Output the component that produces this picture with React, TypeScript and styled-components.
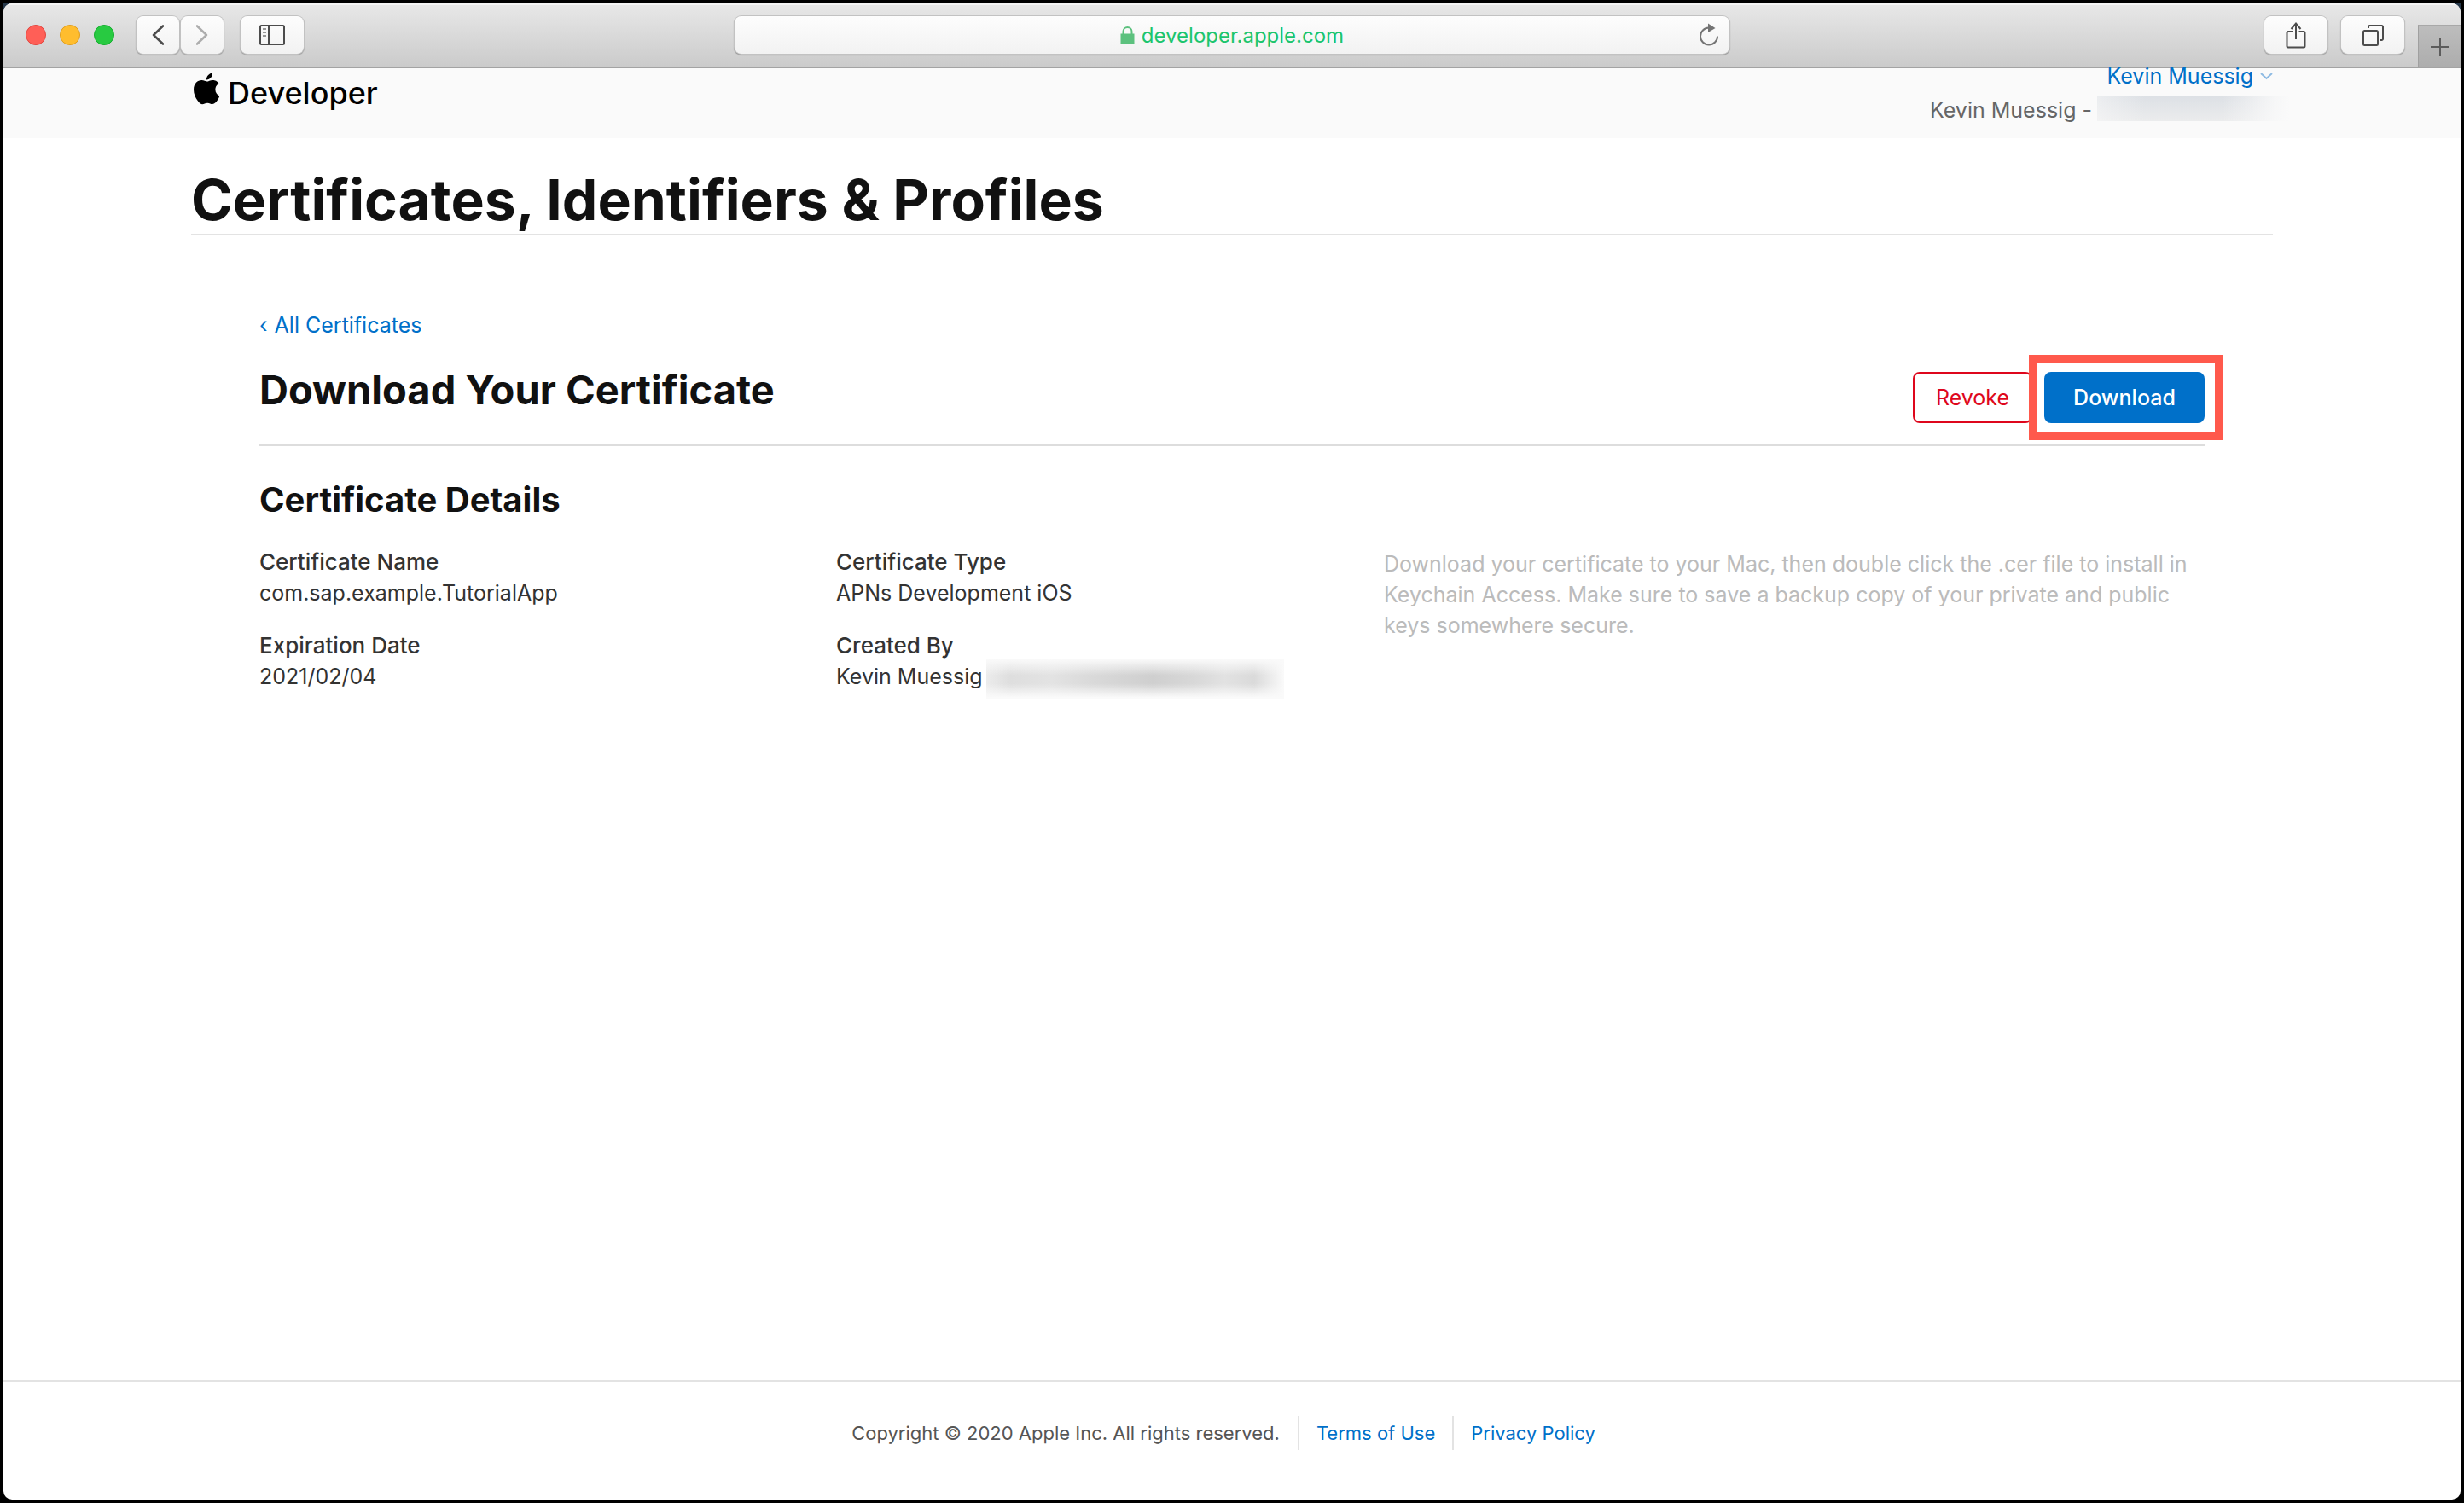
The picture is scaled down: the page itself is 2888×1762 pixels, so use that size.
import React from 'react';
import styled, { createGlobalStyle } from 'styled-components';

const GlobalStyle = createGlobalStyle`
  *, *::before, *::after { box-sizing: border-box; }
  body { margin: 0; background: #000; }
  h1, h2, h3, p, dl, dd, dt, ul { margin: 0; padding: 0; }
  a { color: #0070c9; text-decoration: none; }
  button, input { font: inherit; }
`;

const Screen = styled.div`
  min-height: 100vh;
  padding: 4px;
  display: flex;
  background: linear-gradient(#26384a, #26384a) 0 0 / 100% 14px no-repeat #000;
  box-shadow: inset 0 0 0 4px #000;
  font-family: Inter, "Liberation Sans", sans-serif;
  font-size: 25px;
  line-height: 36px;
  color: #333;
`;

const BrowserWindow = styled.div`
  flex: 1;
  min-width: 0;
  display: flex;
  flex-direction: column;
  overflow: hidden;
  border-radius: 10px;
  background: #fff;
`;

const Toolbar = styled.div`
  height: 76px;
  flex: none;
  display: grid;
  grid-template-columns: 1fr minmax(0, 1166px) 1fr;
  align-items: center;
  border-bottom: 2px solid #a3a3a3;
  background: linear-gradient(#e8e8e8, #cbcbcb);
  box-shadow: inset 0 2px 0 #f4f4f4;
`;

const ToolbarSide = styled.div`
  display: flex;
  align-items: center;
  height: 100%;
`;

const LeftSide = styled(ToolbarSide)`
  padding-left: 26px;
`;

const RightSide = styled(ToolbarSide)`
  justify-content: flex-end;
  gap: 16px;
`;

const Lights = styled.div`
  display: flex;
  gap: 16px;
  margin-right: 26px;
`;

const Light = styled.button<{ $fill: string; $edge: string }>`
  width: 24px;
  height: 24px;
  padding: 0;
  border: 1px solid ${(p) => p.$edge};
  border-radius: 50%;
  background: ${(p) => p.$fill};
`;

const ToolButton = styled.button<{ $narrow?: boolean }>`
  width: ${(p) => (p.$narrow ? 50 : 74)}px;
  height: 44px;
  padding: 0;
  display: flex;
  align-items: center;
  justify-content: center;
  border: 0;
  border-radius: 8px;
  background: linear-gradient(#fdfdfd, #f2f2f2);
  box-shadow: 0 0 0 1px #c2c2c2, 0 1px 1px 1px #a0a0a0;
  color: #4c4c4c;
`;

const NavPair = styled.div`
  display: flex;
  gap: 2px;
  margin-right: 20px;
`;

const NewTabButton = styled.button`
  align-self: flex-end;
  width: 50px;
  height: 49px;
  padding: 2px 0 0;
  display: flex;
  align-items: center;
  justify-content: center;
  border: 0;
  border-left: 1px solid #a0a0a0;
  border-top: 1px solid #a8a8a8;
  background: linear-gradient(#bdbdbd, #adadad);
  color: #5c5c5c;
`;

const AddressBar = styled.div`
  height: 44px;
  display: grid;
  grid-template-columns: 1fr auto 1fr;
  align-items: center;
  border-radius: 8px;
  background: linear-gradient(#fdfdfd, #f2f2f2);
  box-shadow: 0 0 0 1px #c2c2c2, 0 1px 1px 1px #969696;
`;

const Address = styled.label`
  grid-column: 2;
  display: flex;
  align-items: center;
  gap: 8px;
`;

const AddressInput = styled.input`
  field-sizing: content;
  padding: 2px 0 0;
  border: 0;
  outline: 0;
  background: transparent;
  font-size: 24px;
  line-height: 36px;
  color: #1bc56e;
`;

const ReloadButton = styled.button`
  justify-self: end;
  display: flex;
  margin-right: 12px;
  padding: 0;
  border: 0;
  background: none;
  color: #747474;
`;

const SiteHeader = styled.header`
  height: 82px;
  flex: none;
  padding: 0 220px;
  display: flex;
  justify-content: space-between;
  background: #fafafa;
`;

const Brand = styled.a`
  display: flex;
  align-items: flex-start;
  gap: 9px;
  padding: 5px 0 0 2px;
  font-size: 36px;
  font-weight: 500;
  line-height: 48px;
  color: #000;
`;

const Account = styled.div`
  display: flex;
  flex-direction: column;
  align-items: flex-end;
  margin-top: -11px;
  line-height: 40px;
  color: #666;
`;

const AccountMenu = styled.button`
  display: flex;
  align-items: center;
  gap: 8px;
  padding: 0;
  border: 0;
  background: none;
  color: #0070c9;
`;

const Team = styled.div`
  display: flex;
  gap: 6px;
  margin-right: -20px;
`;

const TeamRedaction = styled.span`
  width: 226px;
  height: 30px;
  margin-top: 3px;
  background:
    linear-gradient(90deg, rgba(250, 250, 250, 0.5), rgba(250, 250, 250, 0) 25% 65%, rgba(250, 250, 250, 0.85) 92%, #fafafa),
    linear-gradient(#dce0e5, #ebeced);
`;

const Main = styled.main`
  flex: 1;
  padding: 34px 220px 0;
`;

const PageTitle = styled.h1`
  padding-bottom: 2px;
  border-bottom: 2px solid #e3e3e3;
  font-size: 66px;
  line-height: 76px;
  font-weight: 700;
  color: #111;
`;

const Content = styled.section`
  padding: 87px 80px 0;
`;

const BackLink = styled.a`
  display: inline-flex;
  gap: 8px;
`;

const SectionHead = styled.div`
  display: flex;
  justify-content: space-between;
  margin-top: 28px;
  padding-bottom: 25px;
  border-bottom: 2px solid #ddd;
`;

const SectionTitle = styled.h2`
  font-size: 47px;
  line-height: 60px;
  font-weight: 700;
  color: #111;
`;

const Actions = styled.div`
  display: flex;
  gap: 14px;
  padding-top: 9px;
`;

const ActionButton = styled.button<{ $primary?: boolean }>`
  width: ${(p) => (p.$primary ? 188 : 140)}px;
  height: 60px;
  padding: 0;
  border: 2px solid ${(p) => (p.$primary ? '#0070c9' : '#de071c')};
  border-radius: 8px;
  background: ${(p) => (p.$primary ? '#0070c9' : '#fff')};
  color: ${(p) => (p.$primary ? '#fff' : '#de071c')};
  font-weight: ${(p) => (p.$primary ? 500 : 400)};
`;

const Highlight = styled.div`
  position: relative;
  &::after {
    content: '';
    position: absolute;
    inset: -20px -22px -20px -18px;
    border: 10px solid #ff594c;
    pointer-events: none;
  }
`;

const DetailsTitle = styled.h3`
  margin: 39px 0 31px;
  font-size: 40px;
  line-height: 48px;
  font-weight: 700;
  color: #111;
`;

const Columns = styled.div`
  display: grid;
  grid-template-columns: 676fr 642fr 962fr;
`;

const Facts = styled.dl`
  display: flex;
  flex-direction: column;
  gap: 26px;
`;

const Term = styled.dt`
  font-size: 26px;
  font-weight: 500;
`;

const Value = styled.dd`
  display: flex;
  align-items: center;
  gap: 4px;
  height: 36px;
  white-space: nowrap;
`;

const Hint = styled.p`
  padding-top: 2px;
  color: #bbb;
`;

const EmailRedaction = styled.span`
  width: 349px;
  height: 47px;
  margin-top: 6px;
  background:
    linear-gradient(#fafafa, rgba(250, 250, 250, 0) 40% 60%, #fafafa 95%),
    linear-gradient(90deg, #ececec, #dedede 8%, #e3e3e3 22%, #d9d9d9 36%, #cfcfcf 56%, #d8d8d8 70%, #e2e2e2 80%, #dadada 90%, #fafafa);
`;

const Footer = styled.footer`
  flex: none;
  display: flex;
  justify-content: center;
  align-items: center;
  padding: 40px 0 58px;
  border-top: 2px solid #e3e3e3;
  font-size: 22px;
  line-height: 40px;
  color: #555;
`;

const Copyright = styled.p`
  padding-right: 21px;
`;

const FooterLink = styled.a`
  padding: 0 20px;
  border-left: 2px solid #e3e3e3;
`;

const AppleMark = () => (
  <svg width="32" height="38" viewBox="0 0 32 38" fill="currentColor" aria-hidden="true">
    <path d="M23 .6c.2 2-.6 4-1.800 5.500-1.300 1.500-3.300 2.600-5.200 2.500-.2-2 .7-4 1.900-5.300C19.200 1.800 21.400.700 23 .600z" />
    <path d="M30.400 13c-.2.100-4 2.300-4 7 0 5.500 4.800 7.400 4.900 7.400 0 .1-.8 2.600-2.500 5.200-1.600 2.200-3.200 4.500-5.700 4.500s-3.100-1.400-6-1.400c-2.800 0-3.800 1.500-6.100 1.500s-3.900-2.100-5.700-4.600C3.100 29.600 1 24.800 1 20.200c0-7.300 4.700-11.200 9.400-11.200 2.500 0 4.600 1.600 6.100 1.600 1.500 0 3.900-1.700 6.800-1.700 1.100 0 5 .1 7.100 4.100z" />
  </svg>
);

const ChevronIcon = ({ flip }: { flip?: boolean }) => (
  <svg width="16" height="26" viewBox="0 0 16 26" fill="none" stroke={flip ? '#adadad' : '#4c4c4c'} strokeWidth="2.600" strokeLinecap="round" strokeLinejoin="round" aria-hidden="true">
    <path d={flip ? 'M2 2.500 13 13 2 23.500' : 'M14 2.500 3 13l11 10.500'} />
  </svg>
);

const SidebarIcon = () => (
  <svg width="30" height="24" viewBox="0 0 30 24" fill="none" stroke="currentColor" strokeWidth="2" aria-hidden="true">
    <rect x="1" y="1" width="28" height="22" rx="1.500" />
    <path d="M11 1v22" />
    <path d="M4 5h4M4 9h4M4 13h4" strokeWidth="1.500" stroke="#777" />
  </svg>
);

const LockIcon = () => (
  <svg width="17" height="21" viewBox="0 0 17 21" fill="none" aria-hidden="true">
    <path d="M3.500 10V6a5 5 0 0 1 10 0v4" stroke="#5cc17e" strokeWidth="2" />
    <rect x=".5" y="8.500" width="16" height="12" fill="#5cc17e" />
  </svg>
);

const ReloadIcon = () => (
  <svg width="24" height="28" viewBox="0 0 24 28" fill="none" aria-hidden="true">
    <path d="M12 5.500A10 10 0 1 0 22 15.500" stroke="currentColor" strokeWidth="2" />
    <path d="M11 .500 19.500 6 11 11z" fill="currentColor" />
  </svg>
);

const ShareIcon = () => (
  <svg width="24" height="32" viewBox="0 0 24 32" fill="none" stroke="currentColor" strokeWidth="2" aria-hidden="true">
    <path d="M8.500 12H3a1.500 1.500 0 0 0-1.500 1.500V29A1.500 1.500 0 0 0 3 30.500h18a1.500 1.500 0 0 0 1.500-1.500V13.500A1.500 1.500 0 0 0 21 12h-5.500" />
    <path d="M12 21V3M6.500 9 12 2.500 17.500 9" />
  </svg>
);

const TabsIcon = () => (
  <svg width="26" height="26" viewBox="0 0 26 26" fill="none" stroke="currentColor" strokeWidth="2" aria-hidden="true">
    <rect x="2" y="8" width="17" height="17" rx="1.500" />
    <path d="M8 5V3.500A1.500 1.500 0 0 1 9.500 2h14A1.500 1.500 0 0 1 25 3.500v14a1.500 1.500 0 0 1-1.500 1.500H22" />
  </svg>
);

const PlusIcon = () => (
  <svg width="22" height="22" viewBox="0 0 22 22" stroke="currentColor" strokeWidth="2" aria-hidden="true">
    <path d="M11 0v22M0 11h22" />
  </svg>
);

const CaretIcon = () => (
  <svg width="15" height="10" viewBox="0 0 15 10" fill="none" stroke="#8fbbe3" strokeWidth="2" aria-hidden="true">
    <path d="M1 2l6.500 6L14 2" />
  </svg>
);

const lights = [
  { name: 'Close', fill: '#ff5f57', edge: '#e2463f' },
  { name: 'Minimize', fill: '#ffbd2e', edge: '#e09e1f' },
  { name: 'Zoom', fill: '#28ca41', edge: '#14ae2e' },
];

export default function App() {
  return (
    <>
      <GlobalStyle />
      <Screen>
        <BrowserWindow>
          <Toolbar>
            <LeftSide>
              <Lights>
                {lights.map((l) => (
                  <Light key={l.name} aria-label={l.name} $fill={l.fill} $edge={l.edge} />
                ))}
              </Lights>
              <NavPair>
                <ToolButton $narrow aria-label="Back"><ChevronIcon /></ToolButton>
                <ToolButton $narrow aria-label="Forward"><ChevronIcon flip /></ToolButton>
              </NavPair>
              <ToolButton aria-label="Sidebar"><SidebarIcon /></ToolButton>
            </LeftSide>
            <AddressBar>
              <Address>
                <LockIcon />
                <AddressInput aria-label="Address" defaultValue="developer.apple.com" />
              </Address>
              <ReloadButton aria-label="Reload"><ReloadIcon /></ReloadButton>
            </AddressBar>
            <RightSide>
              <ToolButton aria-label="Share"><ShareIcon /></ToolButton>
              <ToolButton aria-label="Tab overview"><TabsIcon /></ToolButton>
              <NewTabButton aria-label="New tab"><PlusIcon /></NewTabButton>
            </RightSide>
          </Toolbar>

          <SiteHeader>
            <Brand href="#developer">
              <AppleMark />
              Developer
            </Brand>
            <Account>
              <AccountMenu>
                Kevin Muessig
                <CaretIcon />
              </AccountMenu>
              <Team>
                Kevin Muessig -
                <TeamRedaction />
              </Team>
            </Account>
          </SiteHeader>

          <Main>
            <PageTitle>Certificates, Identifiers &amp; Profiles</PageTitle>
            <Content>
              <BackLink href="#certificates">
                <span>‹</span>All Certificates
              </BackLink>
              <SectionHead>
                <SectionTitle>Download Your Certificate</SectionTitle>
                <Actions>
                  <ActionButton>Revoke</ActionButton>
                  <Highlight>
                    <ActionButton $primary>Download</ActionButton>
                  </Highlight>
                </Actions>
              </SectionHead>
              <DetailsTitle>Certificate Details</DetailsTitle>
              <Columns>
                <Facts>
                  <div>
                    <Term>Certificate Name</Term>
                    <Value>com.sap.example.TutorialApp</Value>
                  </div>
                  <div>
                    <Term>Expiration Date</Term>
                    <Value>2021/02/04</Value>
                  </div>
                </Facts>
                <Facts>
                  <div>
                    <Term>Certificate Type</Term>
                    <Value>APNs Development iOS</Value>
                  </div>
                  <div>
                    <Term>Created By</Term>
                    <Value>
                      Kevin Muessig
                      <EmailRedaction />
                    </Value>
                  </div>
                </Facts>
                <Hint>
                  Download your certificate to your Mac, then double click the .cer file to install in Keychain
                  Access. Make sure to save a backup copy of your private and public keys somewhere secure.
                </Hint>
              </Columns>
            </Content>
          </Main>

          <Footer>
            <Copyright>Copyright © 2020 Apple Inc. All rights reserved.</Copyright>
            <FooterLink href="#terms">Terms of Use</FooterLink>
            <FooterLink href="#privacy">Privacy Policy</FooterLink>
          </Footer>
        </BrowserWindow>
      </Screen>
    </>
  );
}
